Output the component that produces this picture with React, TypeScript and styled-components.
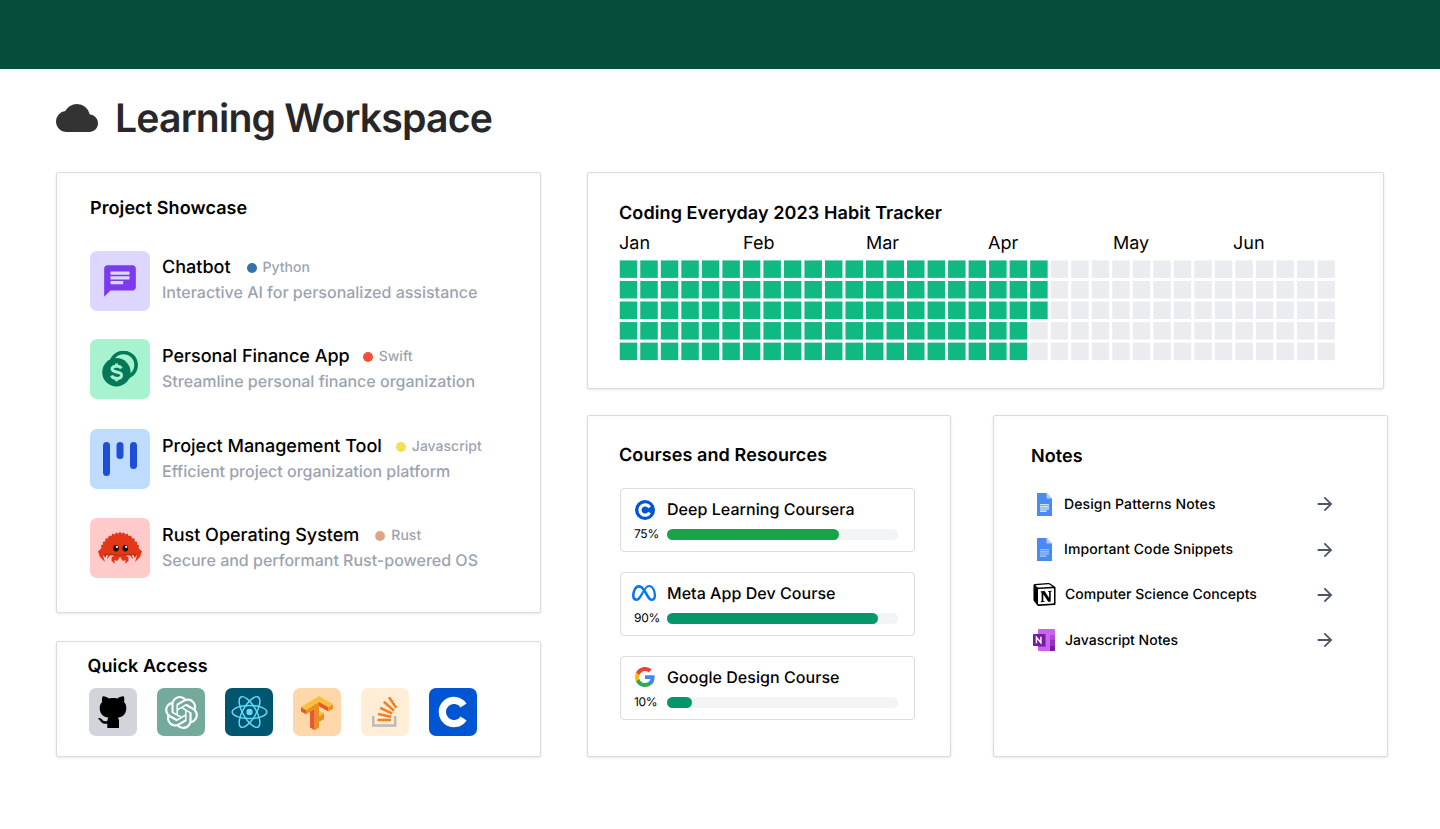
import React from "react";
import styled, { createGlobalStyle } from "styled-components";
import { MdChat, MdCloud, MdArrowForward } from "react-icons/md";
import { SiOpenai, SiMeta, SiNotion } from "react-icons/si";

const GlobalStyle = createGlobalStyle`
  * { box-sizing: border-box; }
  body { margin: 0; background: #fff; font-family: Inter, "Liberation Sans", sans-serif; color: #000; text-rendering: geometricPrecision; }
  h1, h2, p { margin: 0; }
  svg { display: block; }
`;

const Page = styled.div`
  height: 829px;
  overflow: hidden;
`;
const Banner = styled.header`
  height: 69px;
  background: #064e3b;
`;
const TitleRow = styled.div`
  display: flex;
  align-items: center;
  gap: 17px;
  height: 103px;
  padding: 0 56px 5px;
  color: #333;
`;
const Title = styled.h1`
  padding-top: 2px;
  font-size: 39.2px;
  line-height: 48px;
  font-weight: 600;
  letter-spacing: -0.83px;
  color: #27272a;
  white-space: nowrap;
`;
const Columns = styled.main`
  display: flex;
  gap: 46px;
  padding-left: 56px;
`;
const Left = styled.div`
  display: flex;
  flex-direction: column;
  gap: 28px;
  width: 485px;
`;
const Right = styled.div`
  display: flex;
  flex-direction: column;
  gap: 26px;
  width: 802px;
`;
const BottomRow = styled.div`
  display: flex;
  gap: 42px;
`;
const Panel = styled.section<{ $w: number; $h: number; $pad: string }>`
  width: ${(p) => p.$w}px;
  height: ${(p) => p.$h}px;
  padding: ${(p) => p.$pad};
  border: 1px solid #dcdcdc;
  border-radius: 2px;
  background: #fff;
  box-shadow: 0 1px 3px rgba(0, 0, 0, 0.1), inset 0 0 10px rgba(0, 0, 0, 0.02);
`;
const Heading = styled.h2`
  font-size: 18px;
  line-height: 24px;
  font-weight: 600;
  letter-spacing: 0.09px;
  white-space: nowrap;
`;

const Projects = styled.div`
  display: flex;
  flex-direction: column;
  margin-top: 30px;
`;
const Project = styled.div<{ $gap: number }>`
  display: flex;
  gap: 12px;
  height: 60px;
  margin-bottom: ${(p) => p.$gap}px;
`;
const ProjectTile = styled.div<{ $bg: string }>`
  display: flex;
  align-items: center;
  justify-content: center;
  width: 60px;
  height: 60px;
  border-radius: 7px;
  background: ${(p) => p.$bg};
`;
const ProjectText = styled.div`
  padding-top: 4px;
  white-space: nowrap;

  ${Project}:first-child & {
    padding-top: 3px;
  }
`;
const ProjectTop = styled.div`
  display: flex;
  align-items: center;
  height: 27px;
`;
const ProjectName = styled.span`
  font-size: 18px;
  font-weight: 500;
`;
const Dot = styled.i<{ $color: string; $space: number }>`
  width: 10px;
  height: 10px;
  margin: 0 6px 0 ${(p) => p.$space}px;
  border-radius: 50%;
  background: ${(p) => p.$color};
`;
const Language = styled.span`
  font-size: 14px;
  font-weight: 500;
  color: #9ca3af;
`;
const Description = styled.p`
  font-size: 16px;
  line-height: 22px;
  font-weight: 500;
  color: #9ca3af;
`;

const Shortcuts = styled.div`
  display: flex;
  gap: 20px;
  margin: 9px 0 0 1.5px;
`;
const Shortcut = styled.div<{ $bg: string }>`
  display: flex;
  align-items: center;
  justify-content: center;
  width: 48px;
  height: 48px;
  border-radius: 7px;
  background: ${(p) => p.$bg};
`;

const Months = styled.div`
  display: grid;
  grid-template-columns: 124px 123px 122px 125px 120px 100px;
  margin-top: 6px;
  font-size: 18px;
  line-height: 24px;
`;
const Tracker = styled.svg`
  margin-top: 4px;
`;

const Courses = styled.div`
  display: flex;
  flex-direction: column;
  gap: 20px;
  margin: 20px 0 0 1px;
`;
const Course = styled.div`
  display: grid;
  grid-template-columns: 24px 1fr;
  grid-template-rows: 24px 26px;
  column-gap: 11px;
  width: 295px;
  height: 64px;
  padding: 8px 16px 0 11px;
  border: 1px solid #dcdcdc;
  border-radius: 4px;
`;
const CourseIcon = styled.div`
  display: flex;
  align-items: center;
  justify-content: center;
  width: 26px;
  height: 26px;
`;
const CourseName = styled.div`
  font-size: 16px;
  line-height: 24px;
  font-weight: 500;
  letter-spacing: 0.05px;
  white-space: nowrap;
`;
const Percent = styled.div`
  padding-left: 2px;
  font-size: 12px;
  line-height: 26px;
  letter-spacing: -0.3px;
`;
const Track = styled.div`
  height: 11px;
  margin-top: 8px;
  border-radius: 6px;
  background: #f3f4f6;
`;
const Fill = styled.div<{ $color: string }>`
  height: 11px;
  border-radius: 6px;
  background: ${(p) => p.$color};
`;

const Notes = styled.div`
  display: flex;
  flex-direction: column;
  gap: 17.4px;
  margin-top: 21px;
`;
const Note = styled.div`
  display: flex;
  align-items: center;
  height: 28px;
  font-size: 14px;
  font-weight: 500;
  white-space: nowrap;
`;
const NoteIcon = styled.div<{ $gap: number }>`
  display: flex;
  justify-content: center;
  width: 26px;
  margin-right: ${(p) => p.$gap}px;
`;
const NoteName = styled.span<{ $spacing: number }>`
  line-height: 26px;
  padding-top: 1px;
  letter-spacing: ${(p) => p.$spacing}px;
`;
const NoteArrow = styled.div`
  margin-left: auto;
  padding-top: 0.6px;
  color: #4b5563;
`;

const FinanceIcon = () => (
  <svg width="36" height="36" viewBox="0 0 36 36">
    <circle cx="21.5" cy="14" r="12.6" fill="none" stroke="#047857" strokeWidth="3.6" />
    <circle cx="14.4" cy="21.3" r="14.2" fill="#047857" />
    <path d="M19.2 17.4c-.5-1.4-2-2.2-4.6-2.2-2.8 0-4.5 1-4.5 2.8 0 4.2 9.5 1.6 9.5 6.2 0 2-1.8 3.2-4.8 3.2-2.9 0-4.7-1-5.2-2.9M14.6 12.5v3M14.6 27v3.2" fill="none" stroke="#a7f3d0" strokeWidth="3" />
  </svg>
);
const BoardIcon = () => (
  <svg width="36" height="36" viewBox="0 0 36 36" fill="#1d4ed8">
    <rect x="1" y="1" width="7" height="34" rx="3.5" />
    <rect x="14.5" y="1" width="7" height="17" rx="3.5" />
    <rect x="28" y="1" width="7" height="27" rx="3.5" />
  </svg>
);
const CrabIcon = () => (
  <svg width="46" height="34" viewBox="0 0 46 34">
    <path fill="#a82a12" d="M6 21 12 23H34L40 21 38 27 36 23.5H10L8 27Z" />
    <path
      fill="#e43717"
      d="M4.5 17 3.8 14.5 6 13.5 5.8 11 8.2 10.3 8.5 7.5 11 7.3 11.8 4.7 14.2 5 15.5 2.5 17.7 3.5 19.3 1.2 21 2.700 23 .7 25 2.7 26.7 1.2 28.3 3.5 30.5 2.5 31.8 5 34.2 4.7 35 7.3 37.5 7.5 37.8 10.3 40.2 11 40 13.5 42.2 14.5 41.5 17 45 20.5 43 26 38 31 39.8 25 37 22.5 35 24 36 28.500 33 24.5 29 24.5 31.5 26.5 31.5 30 27.5 33 29 29.5 25.5 29.8 23 25.8 20.5 29.8 17 29.5 18.5 33 14.5 30 14.5 26.5 17 24.500 13 24.5 10 28.5 11 24 9 22.5 6.2 25 8 31 3 26 1 20.5Z"
    />
    <ellipse cx="19" cy="17.3" rx="2.8" ry="3.3" fill="#111" />
    <ellipse cx="28.3" cy="17.3" rx="2.8" ry="3.3" fill="#111" />
    <circle cx="19.9" cy="15.9" r="1.1" fill="#fff" />
    <circle cx="29.2" cy="15.9" r="1.1" fill="#fff" />
    <path d="M10 23Q23 25.5 36 23" fill="none" stroke="#b92c12" strokeWidth="1" />
  </svg>
);
const OctocatIcon = () => (
  <svg width="48" height="48" viewBox="0 0 48 48">
    <path d="M13.7 8.3c2.1-.2 4.6 1 6.4 2.2 2.7-.6 5.700-.6 8.200 0 2-1.300 4.300-2.400 6.400-2.200.8 2 .8 4 .3 5.700 1.600 1.600 2.400 3.600 2.300 6.500-.3 6-3.400 8.500-8.400 9.200.9 1.200 1.100 2.300 1.100 3.900V40H18.300v-4.300c-5 .8-6.200-1.600-7.500-3.400-.7-.9-1.500-1-1.700-1.700.2-.9 2.200-.7 3.200.2 1.500 1.400 2.300 3.200 6 2.200.1-1.300.4-2.500 1.100-3.300-5-.8-8.400-3.200-8.700-9.200-.1-2.800.8-4.800 2.500-6.500-.5-1.700-.3-3.900.5-5.700Z" />
  </svg>
);
const ReactIcon = () => (
  <svg width="38" height="36" viewBox="-19 -18 38 36" fill="none" stroke="#61dafb" strokeWidth="1.5">
    <circle cx="0.5" r="3.2" fill="#61dafb" stroke="none" />
    <g transform="translate(.5)">
      <ellipse rx="17.3" ry="6.6" />
      <ellipse rx="17.3" ry="6.6" transform="rotate(60)" />
      <ellipse rx="17.3" ry="6.6" transform="rotate(120)" />
    </g>
  </svg>
);
const TensorIcon = () => (
  <svg width="48" height="48" viewBox="0 0 48 48">
    <path fill="#e55b2d" d="M8 19 13 22V26.3L8 23.5ZM17 20 21.7 22V42.2L17 39.5ZM26 13.7 35.3 19V23.5L26 18.2ZM22 27 26 29V33.5L22 31Z" />
    <path fill="#ed8e24" d="M13 22 26 13.7V39.5L21.7 42.2V21.3L13 26.3ZM35.3 19 40 16.3V20.7L35.3 23.5ZM26 28.3 31 25.3V31.2L26 33.7Z" />
    <path fill="#f8bf3c" d="M8 19 26 8 40 16.3 35.3 19 26 13.7 13 22ZM26 22.8 31 25.3 26 28.3Z" />
  </svg>
);
const StackIcon = () => (
  <svg width="48" height="48" viewBox="0 0 48 48" fill="none">
    <path d="M12.3 28V37.6H34.2V28" stroke="#bcbbbb" strokeWidth="2.5" />
    <path d="M16.5 32H30M17 26 30.2 28.8M19.3 19.8 31.2 25.5M22.8 13.8 33 22.7M28 9.2 35.2 19.8" stroke="#f48024" strokeWidth="2.5" />
  </svg>
);
const CourseraMark = () => (
  <svg width="48" height="48" viewBox="0 0 48 48">
    <path d="M34.6 30.4A11.6 11.6 0 1 1 34.6 17.6" fill="none" stroke="#fff" strokeWidth="7.2" />
  </svg>
);
const CourseraIcon = () => (
  <svg width="20" height="20" viewBox="0 0 20 20">
    <circle cx="10" cy="10" r="10" fill="#0056d2" />
    <path d="M14.6 12.7A5.2 5.2 0 1 1 14.6 7.3" fill="none" stroke="#fff" strokeWidth="3.2" />
  </svg>
);
const GoogleMark = styled.svg`
  margin-top: -2px;
`;
const GoogleIcon = () => (
  <GoogleMark width="20" height="20" viewBox="1 1 22 22">
    <path fill="#4285f4" d="M22.56 12.25c0-.78-.07-1.53-.2-2.25H12v4.26h5.92c-.26 1.37-1.04 2.53-2.21 3.31v2.77h3.57c2.08-1.92 3.28-4.74 3.28-8.09z" />
    <path fill="#34a853" d="M12 23c2.97 0 5.46-.98 7.28-2.66l-3.57-2.77c-.98.66-2.23 1.06-3.71 1.06-2.86 0-5.29-1.93-6.16-4.53H2.18v2.84C3.99 20.53 7.7 23 12 23z" />
    <path fill="#fbbc05" d="M5.84 14.09c-.22-.66-.35-1.36-.35-2.09s.13-1.43.35-2.09V7.07H2.18C1.43 8.55 1 10.22 1 12s.43 3.45 1.18 4.93l3.66-2.84z" />
    <path fill="#ea4335" d="M12 5.38c1.62 0 3.06.56 4.21 1.64l3.15-3.15C17.45 2.09 14.97 1 12 1 7.7 1 3.99 3.47 2.18 7.07l3.66 2.84c.87-2.6 3.3-4.53 6.16-4.53z" />
  </GoogleMark>
);
const MetaMark = styled(SiMeta)`
  margin: -2px 2px 0 0;
  flex: none;
`;
const DocIcon = ({ lines }: { lines: string }) => (
  <svg width="15" height="23" viewBox="0 0 15 23">
    <path fill="#4a8af4" d="M.5 0H9.5L15 5.5V22.5Q15 23 14.5 23H.5Q0 23 0 22.5V.5Q0 0 .5 0Z" />
    <path fill="#b3cefb" d="M9.5 0 15 5.5H9.5Z" />
    <path d="M3 11.8H12M3 13.9H12M3 16H12M3 18.1H9.5" stroke={lines} strokeWidth="1.1" />
  </svg>
);
const OneNoteIcon = () => (
  <svg width="22" height="22" viewBox="0 0 22 22">
    <rect x="5" width="17" height="22" rx="1" fill="#ca64ea" />
    <path fill="#ae4bd5" d="M17 6H22V11H17Z" />
    <path fill="#9332bf" d="M17 11H22V16.5H17Z" />
    <path fill="#7719aa" d="M17 16.5H22V21A1 1 0 0 1 21 22H17Z" />
    <path fill="#a03cc6" d="M5 5H13V18H5Z" />
    <rect y="5" width="12" height="12" rx=".8" fill="#7719aa" />
    <path d="M3.4 14.2V8.3L7.9 13.7V7.8" fill="none" stroke="#fff" strokeWidth="1.4" />
  </svg>
);

const projects = [
  { name: "Chatbot", lang: "Python", dot: "#3572a5", space: 16, bg: "#ddd6fe", gap: 28, text: "Interactive AI for personalized assistance", icon: <MdChat size={38} color="#7c3aed" /> },
  { name: "Personal Finance App", lang: "Swift", dot: "#f05138", space: 13, bg: "#a7f3d0", gap: 30, text: "Streamline personal finance organization", icon: <FinanceIcon /> },
  { name: "Project Management Tool", lang: "Javascript", dot: "#f1e05a", space: 14, bg: "#bfdbfe", gap: 29, text: "Efficient project organization platform", icon: <BoardIcon /> },
  { name: "Rust Operating System", lang: "Rust", dot: "#dea584", space: 16, bg: "#fecaca", gap: 0, text: "Secure and performant Rust-powered OS", icon: <CrabIcon /> },
];
const shortcuts = [
  { bg: "#d1d5db", icon: <OctocatIcon /> },
  { bg: "#74aa9c", icon: <SiOpenai size={33} color="#fff" /> },
  { bg: "#00566f", icon: <ReactIcon /> },
  { bg: "#fed7aa", icon: <TensorIcon /> },
  { bg: "#ffedd5", icon: <StackIcon /> },
  { bg: "#0056d2", icon: <CourseraMark /> },
];
const doneInRow = [21, 21, 21, 20, 20];
const courses = [
  { name: "Deep Learning Coursera", percent: 75, width: 172, color: "#16a34a", icon: <CourseraIcon /> },
  { name: "Meta App Dev Course", percent: 90, width: 211, color: "#059669", icon: <MetaMark size={24} color="#0878f0" /> },
  { name: "Google Design Course", percent: 10, width: 25, color: "#059669", icon: <GoogleIcon /> },
];
const notes = [
  { name: "Design Patterns Notes", gap: 7, spacing: 0.12, icon: <DocIcon lines="#fff" /> },
  { name: "Important Code Snippets", gap: 7, spacing: 0.1, icon: <DocIcon lines="#b3cefb" /> },
  { name: "Computer Science Concepts", gap: 8, spacing: 0, icon: <SiNotion size={23} /> },
  { name: "Javascript Notes", gap: 8, spacing: 0, icon: <OneNoteIcon /> },
];

export default function App() {
  return (
    <Page>
      <GlobalStyle />
      <Banner />
      <TitleRow>
        <MdCloud size={42} />
        <Title>Learning Workspace</Title>
      </TitleRow>
      <Columns>
        <Left>
          <Panel $w={485} $h={441} $pad="24px 0 0 33px">
            <Heading>Project Showcase</Heading>
            <Projects>
              {projects.map((p) => (
                <Project key={p.name} $gap={p.gap}>
                  <ProjectTile $bg={p.bg}>{p.icon}</ProjectTile>
                  <ProjectText>
                    <ProjectTop>
                      <ProjectName>{p.name}</ProjectName>
                      <Dot $color={p.dot} $space={p.space} />
                      <Language>{p.lang}</Language>
                    </ProjectTop>
                    <Description>{p.text}</Description>
                  </ProjectText>
                </Project>
              ))}
            </Projects>
          </Panel>
          <Panel $w={485} $h={116} $pad="13px 0 0 30.5px">
            <Heading>Quick Access</Heading>
            <Shortcuts>
              {shortcuts.map((s) => (
                <Shortcut key={s.bg} $bg={s.bg}>{s.icon}</Shortcut>
              ))}
            </Shortcuts>
          </Panel>
        </Left>
        <Right>
          <Panel $w={797} $h={217} $pad="29px 0 0 31px">
            <Heading>Coding Everyday 2023 Habit Tracker</Heading>
            <Months>
              {["Jan", "Feb", "Mar", "Apr", "May", "Jun"].map((m) => (
                <span key={m}>{m}</span>
              ))}
            </Months>
            <Tracker width="718" height="101">
              {doneInRow.flatMap((done, row) =>
                Array.from({ length: 35 }, (_, col) => (
                  <rect
                    key={`${row}-${col}`}
                    x={0.75 + col * 20.52}
                    y={0.4 + row * 20.55}
                    width={17.5}
                    height={17.5}
                    fill={col < done ? "#10b981" : "#ebecf0"}
                  />
                ))
              )}
            </Tracker>
          </Panel>
          <BottomRow>
            <Panel $w={364} $h={342} $pad="28px 0 0 31px">
              <Heading>Courses and Resources</Heading>
              <Courses>
                {courses.map((c) => (
                  <Course key={c.name}>
                    <CourseIcon>{c.icon}</CourseIcon>
                    <CourseName>{c.name}</CourseName>
                    <Percent>{c.percent}%</Percent>
                    <Track>
                      <Fill $color={c.color} style={{ width: c.width }} />
                    </Track>
                  </Course>
                ))}
              </Courses>
            </Panel>
            <Panel $w={395} $h={342} $pad="29px 51px 0 37px">
              <Heading>Notes</Heading>
              <Notes>
                {notes.map((n) => (
                  <Note key={n.name}>
                    <NoteIcon $gap={n.gap}>{n.icon}</NoteIcon>
                    <NoteName $spacing={n.spacing}>{n.name}</NoteName>
                    <NoteArrow>
                      <MdArrowForward size={22} />
                    </NoteArrow>
                  </Note>
                ))}
              </Notes>
            </Panel>
          </BottomRow>
        </Right>
      </Columns>
    </Page>
  );
}
